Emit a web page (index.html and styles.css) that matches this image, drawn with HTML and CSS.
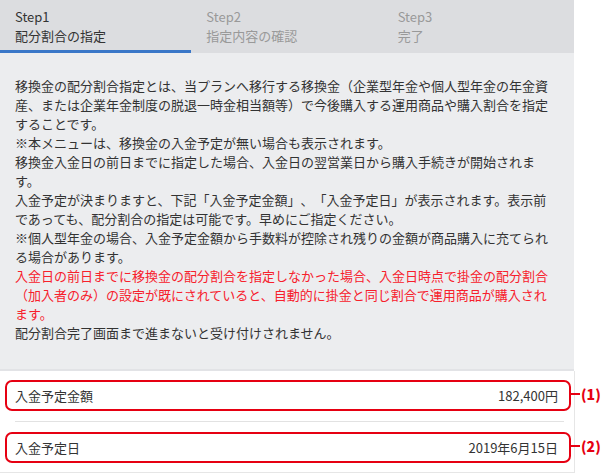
FILE: index.html
```html
<!DOCTYPE html>
<html lang="ja">
<head>
    <meta charset="UTF-8">
    <meta name="viewport" content="width=device-width, initial-scale=1.0">
    <title>配分割合の指定</title>
    <link rel="stylesheet" href="styles.css">
</head>
<body>
    <div class="panel">
        <div class="steps">
            <div class="step active">
                <div>Step1</div>
                <div>配分割合の指定</div>
            </div>
            <div class="step">
                <div>Step2</div>
                <div>指定内容の確認</div>
            </div>
            <div class="step">
                <div>Step3</div>
                <div>完了</div>
            </div>
        </div>
        <div class="notice">
            <p>移換金の配分割合指定とは、当プランへ移行する移換金（企業型年金や個人型年金の年金資産、または企業年金制度の脱退一時金相当額等）で今後購入する運用商品や購入割合を指定することです。</p>
            <p>※本メニューは、移換金の入金予定が無い場合も表示されます。</p>
            <p>移換金入金日の前日までに指定した場合、入金日の翌営業日から購入手続きが開始されます。</p>
            <p>入金予定が決まりますと、下記「入金予定金額」、「入金予定日」が表示されます。表示前であっても、配分割合の指定は可能です。早めにご指定ください。</p>
            <p>※個人型年金の場合、入金予定金額から手数料が控除され残りの金額が商品購入に充てられる場合があります。</p>
            <p class="warn">入金日の前日までに移換金の配分割合を指定しなかった場合、入金日時点で掛金の配分割合（加入者のみ）の設定が既にされていると、自動的に掛金と同じ割合で運用商品が購入されます。</p>
            <p>配分割合完了画面まで進まないと受け付けされません。</p>
        </div>
        <div class="schedule">
            <div class="item">
                <span>入金予定金額</span>
                <span>182,400円</span>
                <span class="mark">(1)</span>
            </div>
            <div class="divider"></div>
            <div class="item">
                <span>入金予定日</span>
                <span>2019年6月15日</span>
                <span class="mark">(2)</span>
            </div>
        </div>
    </div>
</body>
</html>
```

FILE: styles.css
```css
body {
    margin: 0;
    background: white;
    font-family: "Noto Sans CJK JP", "Noto Sans", sans-serif;
    font-size: 13px;
    color: #333;
    text-spacing-trim: space-all;
}
.panel {
    width: 574px;
}
.steps {
    display: flex;
    background: #dcdde0;
    height: 53px;
}
.step {
    flex: 1;
    padding: 7px 15px 0;
    line-height: 19px;
    color: #999;
    border-bottom: 3px solid transparent;
}
.step.active {
    color: #333;
    border-bottom-color: #3a77c8;
}
.notice {
    background: #ecedef;
    padding: 23px 19px 27px 15px;
    line-height: 19px;
    border-bottom: 2px solid #e2e3e6;
}
.notice p {
    margin: 0;
}
.warn {
    color: #f7202c;
}
.schedule {
    padding: 9px 0 9px 5px;
    border-right: 1px solid #e6e6e6;
    border-bottom: 1px solid #e6e6e6;
    margin-right: -1px;
}
.item {
    position: relative;
    display: flex;
    justify-content: space-between;
    align-items: center;
    width: 543px;
    height: 27px;
    padding: 0 11px 0 8px;
    border: 2px solid #e60012;
    border-radius: 7px;
}
.mark {
    position: absolute;
    left: 563px;
    top: 2px;
    padding-left: 11px;
    color: #e60012;
    font-weight: 900;
    font-size: 14px;
    line-height: 20px;
}
.mark::before {
    content: "";
    position: absolute;
    left: 0;
    top: 9px;
    width: 10px;
    height: 2px;
    background: #e60012;
}
.divider {
    height: 1px;
    background: #e2e2e2;
    margin: 10px 10px;
}
```
